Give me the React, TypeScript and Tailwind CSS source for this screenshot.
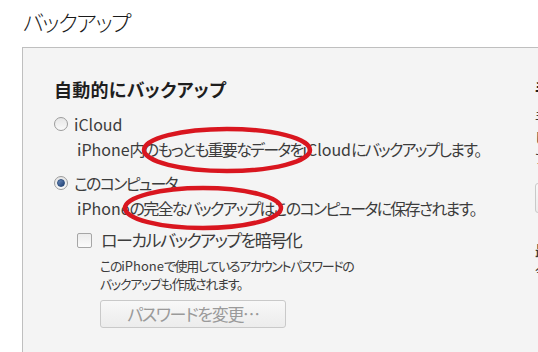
import React from "react";

const font = "font-['Noto_Sans_CJK_JP','Noto_Sans',sans-serif] [font-feature-settings:'palt']";

function Radio({ checked }: { checked?: boolean }) {
  return (
    <span className="relative flex h-[14px] w-[14px] shrink-0 items-center justify-center rounded-full border border-[#9c9c9c] bg-gradient-to-b from-[#e6e6e6] to-[#fafafa]">
      {checked && (
        <span className="h-[8px] w-[8px] rounded-full border border-[#2d4e7e] bg-gradient-to-br from-[#6f8fbf] to-[#1f3f73]" />
      )}
    </span>
  );
}

function L({ children }: { children: React.ReactNode }) {
  return <span className="tracking-normal">{children}</span>;
}

export default function App() {
  return (
    <div className={`relative flex h-[352px] w-[538px] flex-col overflow-hidden bg-white ${font}`}>
      <div className="h-[47px] shrink-0 pl-[23px] pt-[4px] text-[22px] font-light leading-[34px] tracking-[-1.5px] text-[#1a1a1a]">
        バックアップ
      </div>
      <div className="ml-[22px] flex flex-1 border-l border-t border-[#bfbfbf] bg-[#f4f4f4] pl-[31px] pt-[29px]">
        <div className="w-[481px] shrink-0 text-[#3c3c3c]">
          <div className="h-[24px] text-[18px] font-bold leading-[24px] tracking-[0.3px] text-[#1e1e1e]">自動的にバックアップ</div>
          <div className="mt-[11px] flex h-[24px] items-center gap-[6px] text-[16px] leading-[24px]">
            <Radio />
            <span>iCloud</span>
          </div>
          <div className="h-[26px] pl-[23px] text-[16px] leading-[26px] tracking-[-1.75px]">
            <L>iPhone</L>内のもっとも重要なデータを<L>iCloud</L>にバックアップします。
          </div>
          <div className="mt-[9px] flex h-[24px] items-center gap-[6px] text-[16px] leading-[24px] tracking-[-1.75px]">
            <Radio checked />
            <span>このコンピュータ</span>
          </div>
          <div className="h-[26px] pl-[23px] text-[16px] leading-[26px] tracking-[-1.75px]">
            <L>iPhone</L>の完全なバックアップはこのコンピュータに保存されます。
          </div>
          <div className="mt-[7px] flex h-[24px] items-center gap-[9px] pl-[23px] text-[17px] leading-[24px] tracking-[-1.5px]">
            <span className="h-[15px] w-[15px] shrink-0 rounded-[2px] border border-[#a6a6a6] bg-gradient-to-b from-[#ececec] to-[#fbfbfb]" />
            <span>ローカルバックアップを暗号化</span>
          </div>
          <div className="mt-[5px] pl-[46px] text-[13px] leading-[18px] tracking-[-1.3px]">
            <div>この<L>iPhone</L>で使用しているアカウントパスワードの</div>
            <div>バックアップも作成されます。</div>
          </div>
          <div className="ml-[46px] mt-[7px] flex h-[28px] w-[186px] items-center justify-center rounded-[3px] border border-[#c9c9c9] bg-gradient-to-b from-[#f8f8f8] to-[#ececec] text-[17px] tracking-[-1.3px] text-[#9a9a9a]">
            パスワードを変更…
          </div>
        </div>
        <div className="w-[300px] shrink-0 text-[#3c3c3c]">
          <div className="h-[24px] text-[17px] font-bold leading-[24px] text-[#1e1e1e]">手動でバックアップ/復元</div>
          <div className="mt-[6px] text-[14px] leading-[20px]">
            <div>手動で、このコンピュータにiPhoneをバックアップ</div>
            <div>したり、このコンピュータに保存されたバックアップ</div>
          </div>
          <div className="mt-[16px] flex h-[30px] w-[160px] items-center justify-center rounded-[3px] border border-[#c9c9c9] bg-gradient-to-b from-[#f8f8f8] to-[#ececec] text-[15px]">
            今すぐバックアップ
          </div>
          <div className="mt-[27px] text-[14px] font-bold leading-[20px]">最新のバックアップ:</div>
          <div className="text-[14px] leading-[20px]">今日 10:24 iCloudへ</div>
        </div>
      </div>
      <svg className="pointer-events-none absolute left-0 top-0" width="538" height="352">
        <ellipse cx="227" cy="150" rx="83" ry="21" fill="none" stroke="#d9161f" strokeWidth="4.5" />
        <ellipse cx="203" cy="208" rx="78" ry="20" fill="none" stroke="#d9161f" strokeWidth="4.5" />
      </svg>
    </div>
  );
}
